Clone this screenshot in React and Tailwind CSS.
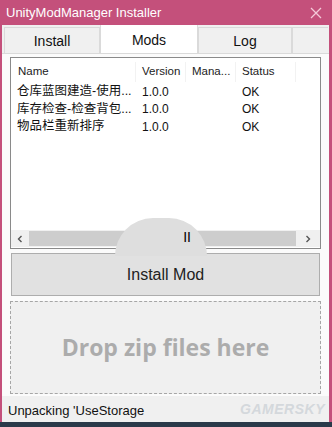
import React from "react";

const rows = [
  ["仓库蓝图建造-使用...", "1.0.0", "", "OK"],
  ["库存检查-检查背包...", "1.0.0", "", "OK"],
  ["物品栏重新排序", "1.0.0", "", "OK"],
];

export default function App() {
  const font = { fontFamily: '"Liberation Sans", "Noto Sans CJK SC", sans-serif' };
  return (
    <div className="w-[332px] h-[427px] bg-[#c4507b] overflow-hidden relative flex flex-col" style={font}>
      {/* Title bar */}
      <div className="h-[25px] shrink-0 flex items-center justify-between pl-[6px] pr-[10px] text-white">
        <span className="text-[13px] leading-none">UnityModManager Installer</span>
        <svg width="12" height="12" viewBox="0 0 12 12" className="mt-[1px]">
          <path d="M1 1 L11 11 M11 1 L1 11" stroke="#f4c9d8" strokeWidth="1.3" />
        </svg>
      </div>
      {/* Window body */}
      <div className="ml-[2px] mr-[3px] h-[397px] bg-[#f0f0f0] flex flex-col relative">
        {/* Tabs */}
        <div className="h-[28px] shrink-0 flex items-end pl-[2px] relative">
          <div className="w-[96px] h-[26px] border border-[#dadada] border-b-0 bg-[#f0f0f0] flex items-center justify-center text-[14px] text-[#111] pt-[2px]">Install</div>
          <div className="w-[98px] h-[28px] bg-white border-x border-[#dadada] flex items-start justify-center text-[14px] text-[#111] pt-[5px] z-10">Mods</div>
          <div className="w-[94px] h-[26px] border border-[#dadada] border-b-0 bg-[#f0f0f0] flex items-center justify-center text-[14px] text-[#111] pt-[2px]">Log</div>
          <div className="w-[36px] h-[26px] border-t border-l border-[#dadada] bg-[#f0f0f0]"></div>
        </div>
        {/* Tab page */}
        <div className="flex-1 bg-[#fbfbfb] border-t border-[#dadada] flex flex-col px-[8px] pt-[3px]">
          {/* List view */}
          <div className="h-[192px] bg-white border border-[#8a8a8a] flex flex-col">
            <div className="h-[25px] flex items-end text-[11.5px] text-[#222] pb-[1px]">
              <div className="w-[125px] pl-[7px] h-[20px] flex items-center border-r border-[#f2f2f2]">Name</div>
              <div className="w-[50px] pl-[6px] h-[20px] flex items-center border-r border-[#f2f2f2]">Version</div>
              <div className="w-[50px] pl-[6px] h-[20px] flex items-center border-r border-[#f2f2f2]">Mana...</div>
              <div className="w-[60px] pl-[6px] h-[20px] flex items-center border-r border-[#f2f2f2]">Status</div>
            </div>
            <div className="flex flex-col text-[12px] text-[#111]">
              {rows.map((r, i) => (
                <div key={i} className="h-[17.5px] flex items-center">
                  <div className="w-[125px] pl-[6px] whitespace-nowrap text-[12.5px]">{r[0]}</div>
                  <div className="w-[50px] pl-[6px]">{r[1]}</div>
                  <div className="w-[50px] pl-[6px]">{r[2]}</div>
                  <div className="w-[60px] pl-[6px]">{r[3]}</div>
                </div>
              ))}
            </div>
            <div className="flex-1"></div>
            {/* Horizontal scrollbar */}
            <div className="h-[17px] mb-[1px] flex items-center bg-[#f0f0f0]">
              <div className="w-[18px] h-full flex items-center justify-center bg-[#f0f0f0]">
                <svg width="8" height="8" viewBox="0 0 8 8"><path d="M5.5 1 L2.5 4 L5.5 7" stroke="#555" strokeWidth="1.4" fill="none" /></svg>
              </div>
              <div className="flex-1 h-[15px] bg-[#cdcdcd]"></div>
              <div className="w-[24px] h-full flex items-center justify-center bg-[#f0f0f0]">
                <svg width="8" height="8" viewBox="0 0 8 8"><path d="M2.5 1 L5.5 4 L2.5 7" stroke="#555" strokeWidth="1.4" fill="none" /></svg>
              </div>
            </div>
          </div>
          {/* Install Mod button */}
          <div className="mt-[4px] mx-[1px] h-[43px] bg-[#e1e1e1] border border-[#adadad] flex items-center justify-center text-[16px] text-[#222]">
            Install Mod
          </div>
          {/* Drop zone */}
          <div className="mt-[5px] h-[93px] bg-[#f0f0f0] border border-dashed border-[#a6a6a6] flex items-center justify-center">
            <span className="text-[23px] font-bold text-[#acacac]" style={{ fontFamily: '"Open Sans", "Liberation Sans", sans-serif' }}>Drop zip files here</span>
          </div>
        </div>
        {/* Status bar */}
        <div className="h-[26px] shrink-0 bg-[#f0f0f0] flex items-center pl-[6px] pt-[3px] text-[13px] text-[#111] relative">
          Unpacking 'UseStorage
          <span className="absolute right-[4px] bottom-[2px] italic font-bold text-[14px] text-[#d4d8dc] tracking-[0.5px]">GAMERSKY</span>
        </div>
        {/* watermark blob */}
        <div className="absolute left-[113px] top-[193px] w-[92px] h-[38px] rounded-t-full bg-[#dedede] pointer-events-none flex items-start justify-end pr-[16px] pt-[9px] text-[14px] text-black">
          II
        </div>
      </div>
      <div className="flex-1 bg-[#2a3a4a]"></div>
    </div>
  );
}
